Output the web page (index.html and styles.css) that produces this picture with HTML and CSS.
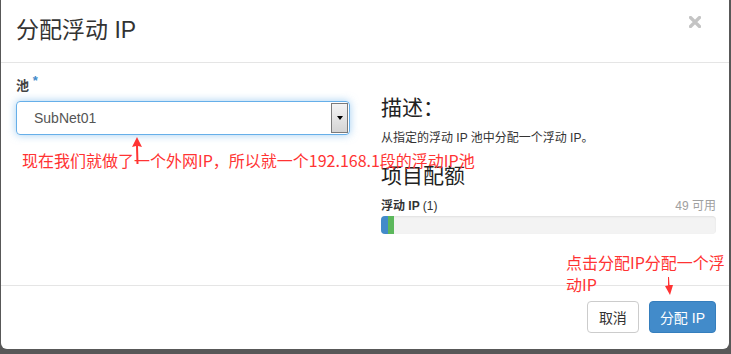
FILE: index.html
```html
<!DOCTYPE html>
<html lang="zh-CN">
<head>
  <meta charset="UTF-8">
  <title>分配浮动 IP</title>
  <link rel="stylesheet" href="styles.css">
</head>
<body>
  <div class="modal">
    <!-- Header -->
    <div class="modal-header">
      <h3 class="modal-title">分配浮动 IP</h3>
      <svg class="close" width="12" height="12" viewBox="0 0 12 12">
        <path d="M1.5 1.5 L10.5 10.5 M10.5 1.5 L1.5 10.5" stroke="#c4c4c4" stroke-width="3.2" stroke-linecap="round"/>
      </svg>
    </div>

    <!-- Body -->
    <div class="modal-body">
      <div class="left">
        <label class="field-label">池 <span class="req">*</span></label>
        <div class="select">
          <span class="select-value">SubNet01</span>
          <span class="select-btn"><span class="caret"></span></span>
        </div>
      </div>
      <div class="right">
        <h3 class="side-title">描述：</h3>
        <p class="side-text">从指定的浮动 IP 池中分配一个浮动 IP。</p>
        <h3 class="side-title quota-title">项目配额</h3>
        <div class="quota-row">
          <strong>浮动 IP <span class="count">(1)</span></strong>
          <span class="avail">49 可用</span>
        </div>
        <div class="progress">
          <div class="bar bar-used"></div>
          <div class="bar bar-new"></div>
        </div>
      </div>
    </div>

    <!-- Footer -->
    <div class="modal-footer">
      <button class="btn">取消</button>
      <button class="btn btn-primary">分配 IP</button>
    </div>

    <!-- annotations drawn over the dialog -->
    <div class="note note-pool">现在我们就做了一个外网IP，所以就一个192.168.1段的浮动IP池</div>
    <div class="note note-btn">点击分配IP分配一个浮<br>动IP</div>
    <svg class="arrow arrow-up" width="14" height="30" viewBox="0 0 14 30">
      <path d="M7 1 L12 11 L8 10 L8.5 28 L6.5 28 L6 10 L2 11 Z" fill="#ff3333"/>
    </svg>
    <svg class="arrow arrow-down" width="12" height="20" viewBox="0 0 12 20">
      <path d="M5 0 L6 0 L6.5 8 L10 8 L7 18 L2 9 L5 8.5 Z" fill="#ff3333"/>
    </svg>
  </div>
</body>
</html>
```

FILE: styles.css
```css
body {
  margin: 0;
  background-color: #585858;
  font-family: "Liberation Sans", "Noto Sans CJK SC", sans-serif;
  color: #333;
  height: 354px;
  overflow: hidden;
}
.modal {
  position: relative;
  margin-left: 1px;
  width: 728px;
  background-color: #fff;
  border-radius: 0 0 6px 6px;
}
.modal-header {
  display: flex;
  justify-content: space-between;
  align-items: flex-start;
  height: 62px;
  padding: 0 28px 0 15px;
  border-bottom: 1px solid #e5e5e5;
  box-sizing: content-box;
}
.modal-title {
  margin: 0;
  padding-top: 14px;
  font-size: 23px;
  font-weight: normal;
  line-height: 32px;
  color: #333;
}
.close {
  margin-top: 16px;
}
.modal-body {
  display: grid;
  grid-template-columns: 334px 335px;
  column-gap: 31px;
  height: 222px;
  padding: 0 0 0 15px;
  box-sizing: border-box;
}
.field-label {
  display: block;
  margin-top: 14px;
  font-size: 13px;
  font-weight: bold;
  line-height: 18px;
  color: #444;
}
.req {
  position: relative;
  top: -5px;
  color: #428bca;
  font-size: 13px;
}
.select {
  display: flex;
  align-items: stretch;
  margin-top: 6px;
  height: 34px;
  border: 1px solid #66afe9;
  border-radius: 4px;
  box-shadow: 0 0 8px rgba(102, 175, 233, 0.6);
  box-sizing: border-box;
}
.select-value {
  flex: 1;
  padding-left: 17px;
  font-size: 14px;
  line-height: 32px;
  color: #555;
}
.select-btn {
  display: flex;
  align-items: center;
  justify-content: center;
  width: 15px;
  margin: 1px 1px 1px 0;
  border: 1px solid #7a7a7a;
  background: linear-gradient(#f4f4f4, #d4d4d4);
}
.caret {
  width: 0;
  height: 0;
  border-left: 3px solid transparent;
  border-right: 3px solid transparent;
  border-top: 4px solid #000;
}
.right {
  padding-top: 33px;
}
.side-title {
  margin: 0;
  font-size: 21px;
  font-weight: normal;
  line-height: 24px;
  color: #222;
}
.side-text {
  margin: 10px 0 0;
  font-size: 12px;
  line-height: 16px;
  color: #333;
}
.quota-title {
  margin-top: 18px;
}
.quota-row {
  display: flex;
  justify-content: space-between;
  margin-top: 11px;
  font-size: 12px;
  line-height: 15px;
}
.quota-row strong {
  color: #333;
}
.count {
  font-weight: normal;
}
.avail {
  color: #a0a0a0;
}
.progress {
  display: flex;
  height: 18px;
  margin-top: 2px;
  background-color: #f3f3f3;
  border-radius: 4px;
  overflow: hidden;
  box-shadow: inset 0 1px 2px rgba(0, 0, 0, 0.08);
}
.bar-used {
  width: 7px;
  background-color: #428bca;
}
.bar-new {
  width: 6px;
  background-color: #5cb85c;
}
.modal-footer {
  display: flex;
  justify-content: flex-end;
  gap: 10px;
  padding: 15px 13px 16px 0;
  border-top: 1px solid #e5e5e5;
}
.btn {
  height: 32px;
  padding: 0 11px;
  font-family: inherit;
  font-size: 14px;
  color: #333;
  background-color: #fff;
  border: 1px solid #ccc;
  border-radius: 4px;
}
.btn-primary {
  padding: 0 10px;
  color: #fff;
  background-color: #428bca;
  border-color: #357ebd;
}
.note {
  position: absolute;
  font-family: "Noto Sans CJK SC", sans-serif;
  font-size: 16px;
  line-height: 22px;
  color: #ff3333;
  white-space: nowrap;
}
.note-pool {
  left: 21px;
  top: 149px;
}
.note-btn {
  left: 565px;
  top: 251px;
}
.arrow {
  position: absolute;
}
.arrow-up {
  left: 129px;
  top: 136px;
}
.arrow-down {
  left: 662px;
  top: 277px;
}
```
